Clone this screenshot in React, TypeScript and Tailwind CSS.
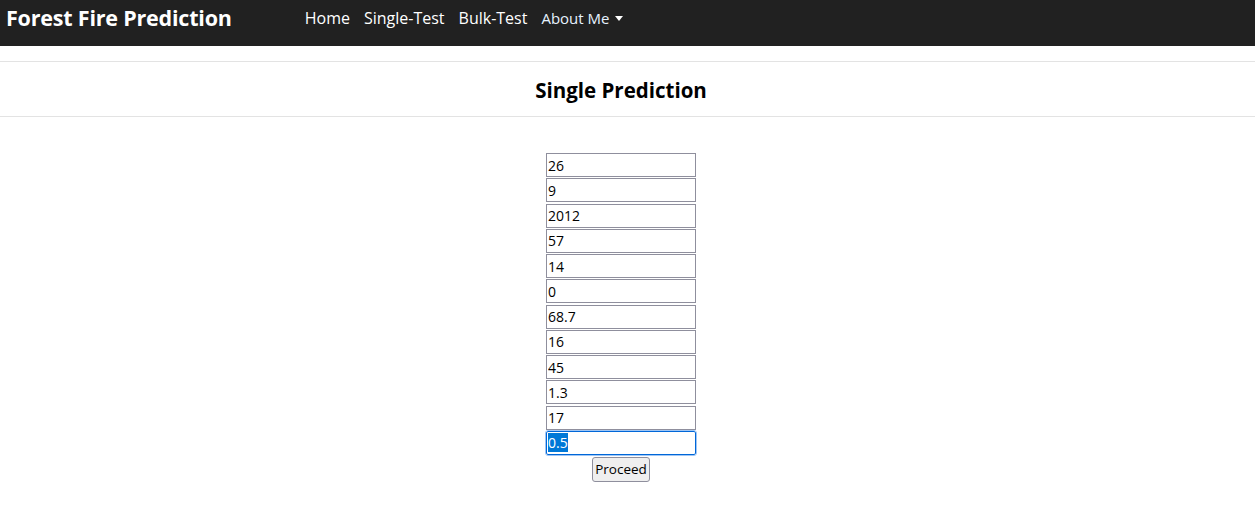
import { useEffect, useRef, useState } from "react";

const values = ["26", "9", "2012", "57", "14", "0", "68.7", "16", "45", "1.3", "17", "0.5"];

export default function App() {
  const [fields, setFields] = useState(values);
  const lastRef = useRef<HTMLInputElement>(null);

  useEffect(() => {
    lastRef.current?.focus();
    lastRef.current?.select();
  }, []);

  return (
    <div className="min-h-screen bg-white text-black" style={{ fontFamily: '"Open Sans", "Noto Sans", sans-serif' }}>
      {/* Navbar */}
      <nav className="flex h-[46px] items-center bg-[#212121] pb-[10px]">
        <a href="#" className="ml-[6px] text-[21.5px] font-bold tracking-[-0.2px] text-white">
          Forest Fire Prediction
        </a>
        <ul className="ml-[73px] flex items-center gap-[14px] text-[16px] text-white">
          <li><a href="#">Home</a></li>
          <li><a href="#">Single-Test</a></li>
          <li><a href="#">Bulk-Test</a></li>
          <li className="flex items-center text-[15px] text-[#e6f2ff]">
            <a href="#">About Me</a>
            <span className="ml-[6px] h-0 w-0 border-x-[4px] border-t-[5px] border-x-transparent border-t-white" />
          </li>
        </ul>
      </nav>

      {/* Heading */}
      <div className="mt-[15px] border-y border-[#e3e3e3]">
        <h2 className="pt-[16px] pb-[14px] pr-[13px] text-center text-[20.5px] leading-[24px] font-bold">
          Single Prediction
        </h2>
      </div>

      {/* Form */}
      <form className="mt-[36px] flex flex-col items-center pr-[13px]" onSubmit={(e) => e.preventDefault()}>
        <div className="flex flex-col gap-[1.27px]">
          {fields.map((v, i) => {
            const last = i === fields.length - 1;
            return (
              <input
                key={i}
                ref={last ? lastRef : undefined}
                value={v}
                onChange={(e) => setFields(fields.map((f, j) => (j === i ? e.target.value : f)))}
                className={
                  last
                    ? "h-[24px] w-[150px] rounded-[2px] border border-[#0067d8] px-[1px] text-[14px] outline outline-1 outline-[#9fc6f5] selection:bg-[#0078d7] selection:text-white"
                    : "h-[24px] w-[150px] border border-[#8f8f9d] px-[1px] text-[14px] outline-none"
                }
              />
            );
          })}
        </div>
        <button className="mt-[2px] h-[25px] w-[58px] rounded-[3px] border border-[#8f8f9d] bg-[#efefef] text-[13.5px]">
          Proceed
        </button>
      </form>
    </div>
  );
}
